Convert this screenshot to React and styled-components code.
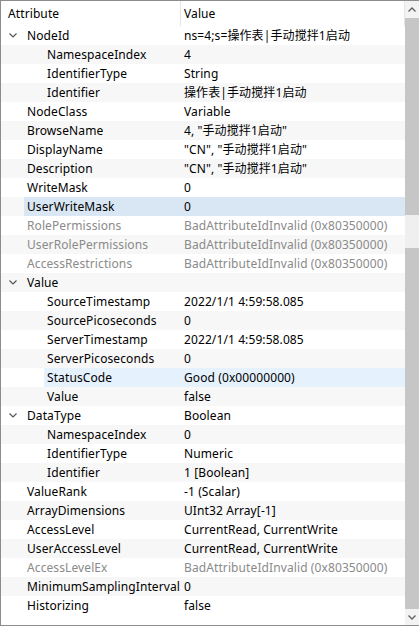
import styled, { createGlobalStyle } from 'styled-components'

const GlobalStyle = createGlobalStyle`
  html, body {
    margin: 0;
    padding: 0;
    background: #ffffff;
  }
  body {
    font-family: "Noto Sans", "Noto Sans CJK SC", sans-serif;
    font-size: 12px;
    letter-spacing: 0.1px;
    color: #000;
  }
`

const attributes = [
  { level: 0, open: true, name: 'NodeId', value: 'ns=4;s=操作表|手动搅拌1启动' },
  { level: 2, name: 'NamespaceIndex', value: '4' },
  { level: 2, name: 'IdentifierType', value: 'String' },
  { level: 2, name: 'Identifier', value: '操作表|手动搅拌1启动' },
  { level: 1, name: 'NodeClass', value: 'Variable' },
  { level: 1, name: 'BrowseName', value: '4, "手动搅拌1启动"' },
  { level: 1, name: 'DisplayName', value: '"CN", "手动搅拌1启动"' },
  { level: 1, name: 'Description', value: '"CN", "手动搅拌1启动"' },
  { level: 1, name: 'WriteMask', value: '0' },
  { level: 1, name: 'UserWriteMask', value: '0', hover: 'strong' },
  { level: 1, name: 'RolePermissions', value: 'BadAttributeIdInvalid (0x80350000)', muted: true },
  { level: 1, name: 'UserRolePermissions', value: 'BadAttributeIdInvalid (0x80350000)', muted: true },
  { level: 1, name: 'AccessRestrictions', value: 'BadAttributeIdInvalid (0x80350000)', muted: true },
  { level: 0, open: true, name: 'Value', value: '' },
  { level: 2, name: 'SourceTimestamp', value: '2022/1/1 4:59:58.085' },
  { level: 2, name: 'SourcePicoseconds', value: '0' },
  { level: 2, name: 'ServerTimestamp', value: '2022/1/1 4:59:58.085' },
  { level: 2, name: 'ServerPicoseconds', value: '0' },
  { level: 2, name: 'StatusCode', value: 'Good (0x00000000)', hover: 'soft' },
  { level: 2, name: 'Value', value: 'false' },
  { level: 0, open: true, name: 'DataType', value: 'Boolean' },
  { level: 2, name: 'NamespaceIndex', value: '0' },
  { level: 2, name: 'IdentifierType', value: 'Numeric' },
  { level: 2, name: 'Identifier', value: '1 [Boolean]' },
  { level: 1, name: 'ValueRank', value: '-1 (Scalar)' },
  { level: 1, name: 'ArrayDimensions', value: 'UInt32 Array[-1]' },
  { level: 1, name: 'AccessLevel', value: 'CurrentRead, CurrentWrite' },
  { level: 1, name: 'UserAccessLevel', value: 'CurrentRead, CurrentWrite' },
  { level: 1, name: 'AccessLevelEx', value: 'BadAttributeIdInvalid (0x80350000)', muted: true },
  { level: 1, name: 'MinimumSamplingInterval', value: '0' },
  { level: 1, name: 'Historizing', value: 'false' },
]

const hoverColors = {
  strong: '#d9e6f4',
  soft: '#e5f1fc',
}

const Frame = styled.div`
  width: 419px;
  height: 626px;
  box-sizing: border-box;
  border: 1px solid #8c8c8c;
  border-right: none;
  display: flex;
  overflow: hidden;
  background: #fff;
`
const Grid = styled.div`
  flex: 1;
  display: flex;
  flex-direction: column;
  min-width: 0;
`
const Header = styled.div`
  display: grid;
  grid-template-columns: 180px 1fr;
  height: 25px;
  flex-shrink: 0;
`
const HeaderCell = styled.div`
  display: flex;
  align-items: center;
  padding-left: ${({ $pad }) => $pad}px;
  border-right: 1px solid #e5e5e5;
  padding-bottom: 1px;
`
const Row = styled.div`
  display: grid;
  grid-template-columns: 180px 1fr;
  height: 19px;
  line-height: 19px;
  background: ${({ $odd }) => ($odd ? '#f7f7f7' : '#ffffff')};
  color: ${({ $muted }) => ($muted ? '#8a8a8a' : '#000')};
  white-space: nowrap;
`
const NameCell = styled.div`
  display: flex;
  align-items: center;
  padding-left: ${({ $level }) => ($level === 2 ? 46 : 26)}px;
  position: relative;
  &::before {
    content: '';
    display: ${({ $hover }) => ($hover ? 'block' : 'none')};
    position: absolute;
    top: 0;
    bottom: 0;
    left: ${({ $level }) => ($level === 2 ? 43 : 23)}px;
    right: 0;
    background: ${({ $hover }) => hoverColors[$hover]};
  }
  & > span {
    position: relative;
  }
`
const ValueCell = styled.div`
  padding-left: 3px;
  background: ${({ $hover }) => ($hover ? hoverColors[$hover] : 'transparent')};
  overflow: hidden;
`
const Toggle = styled.svg`
  position: absolute;
  left: 8px;
  top: 7px;
`
const Scrollbar = styled.div`
  width: 14px;
  display: flex;
  flex-direction: column;
  background: #c6c6c6;
`
const ArrowButton = styled.div`
  height: ${({ $h }) => $h}px;
  background: #f3f3f3;
  display: flex;
  align-items: center;
  justify-content: center;
  flex-shrink: 0;
`
const Track = styled.div`
  height: ${({ $h }) => $h}px;
  flex: ${({ $grow }) => ($grow ? 1 : 'none')};
  background: ${({ $light }) => ($light ? '#efefef' : '#c6c6c6')};
`

function Chevron({ up }) {
  return (
    <svg width="8" height="5" viewBox="0 0 8 5">
      <path
        d={up ? 'M0.5 4.5 L4 1 L7.5 4.5' : 'M0.5 0.5 L4 4 L7.5 0.5'}
        fill="none"
        stroke="#606060"
        strokeWidth="1.3"
      />
    </svg>
  )
}

function AttributeRow({ item, index }) {
  return (
    <Row $odd={index % 2 === 1} $muted={item.muted}>
      <NameCell $level={item.level} $hover={item.hover}>
        {item.open && (
          <Toggle width="8" height="5" viewBox="0 0 8 5">
            <path d="M0.5 0.5 L4 4 L7.5 0.5" fill="none" stroke="#555" strokeWidth="1.2" />
          </Toggle>
        )}
        <span>{item.name}</span>
      </NameCell>
      <ValueCell $hover={item.hover}>{item.value}</ValueCell>
    </Row>
  )
}

export default function App() {
  return (
    <>
      <GlobalStyle />
      <Frame>
        <Grid>
          <Header>
            <HeaderCell $pad={7}>Attribute</HeaderCell>
            <HeaderCell $pad={3}>Value</HeaderCell>
          </Header>
          {attributes.map((item, i) => (
            <AttributeRow key={i} item={item} index={i} />
          ))}
        </Grid>
        <Scrollbar>
          <ArrowButton $h={17}>
            <Chevron up />
          </ArrowButton>
          <Track $h={197} />
          <Track $h={33} $light />
          <Track $grow />
          <ArrowButton $h={16}>
            <Chevron />
          </ArrowButton>
        </Scrollbar>
      </Frame>
    </>
  )
}
